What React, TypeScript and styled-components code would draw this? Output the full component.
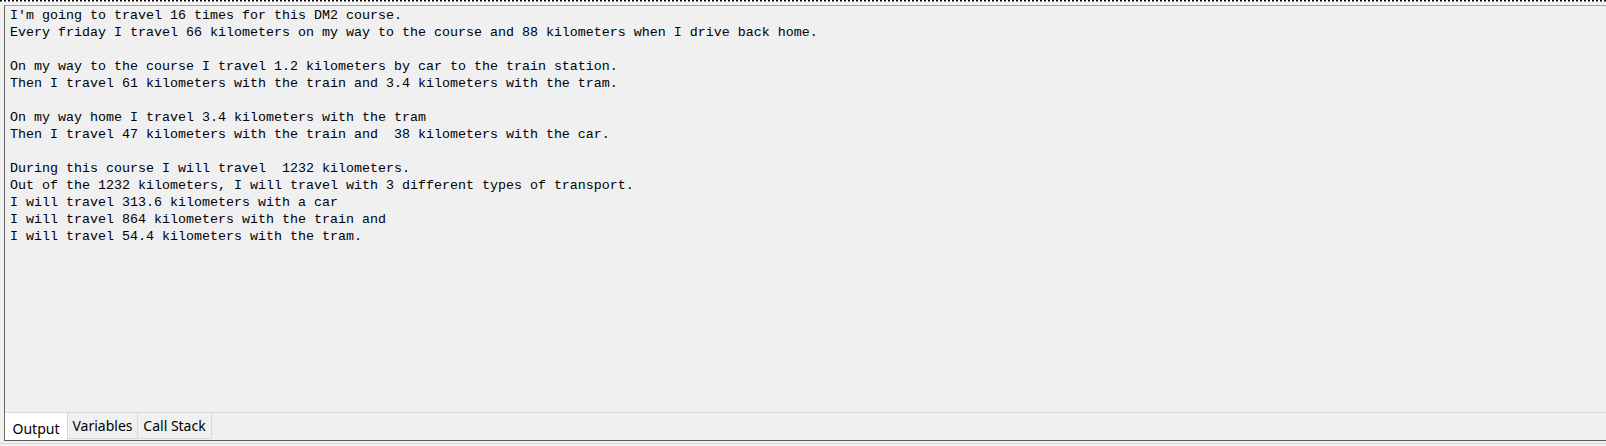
import React from "react";
import styled, { createGlobalStyle } from "styled-components";

const Global = createGlobalStyle`
  html, body { margin: 0; padding: 0; background: #f0f0f0; }
  body { width: 1606px; height: 446px; overflow: hidden; }
`;

const Frame = styled.div`
  width: 1606px;
  height: 446px;
  display: flex;
  flex-direction: column;
  background: #f0f0f0;
  box-sizing: border-box;
`;

const DotRule = styled.div`
  height: 2px;
  flex: none;
  background:
    repeating-linear-gradient(90deg, #111 0 2px, #fff 2px 4px) top / 100% 1px no-repeat,
    repeating-linear-gradient(90deg, #777 0 2px, #fff 2px 4px) bottom / 100% 1px no-repeat;
`;

const Panel = styled.div`
  flex: none;
  height: 436px;
  margin: 3px 0 0 4px;
  border-top: 1px solid #a0a0a0;
  border-left: 1px solid #696969;
  border-bottom: 1px solid #5a5a5a;
  display: flex;
  flex-direction: column;
  box-sizing: border-box;
`;

const Output = styled.pre`
  flex: 1;
  margin: 0;
  padding: 1px 0 0 5px;
  font-family: "Liberation Mono", "Courier New", monospace;
  font-size: 13.33px;
  line-height: 17px;
  color: #000;
  white-space: pre;
  overflow: hidden;
`;

const TabStrip = styled.div`
  flex: none;
  height: 28px;
  border-top: 1px solid #d9d9d9;
  display: flex;
  align-items: flex-start;
  box-sizing: border-box;
`;

const Tab = styled.div<{ $w: number; $active?: boolean }>`
  width: ${(p) => p.$w}px;
  height: ${(p) => (p.$active ? 27 : 26)}px;
  box-sizing: border-box;
  display: flex;
  align-items: center;
  justify-content: center;
  padding-top: ${(p) => (p.$active ? 3 : 0)}px;
  background: ${(p) => (p.$active ? "#ffffff" : "#f0f0f0")};
  border-right: 1px solid #d9d9d9;
  border-bottom: ${(p) => (p.$active ? "none" : "1px solid #d9d9d9")};
  font-family: "Segoe UI", "Noto Sans", sans-serif;
  font-size: 14px;
  color: #000;
`;

const Footer = styled.div`
  flex: 1;
  border-top: 2px solid #f0f0f0;
  position: relative;
  &::after {
    content: "";
    display: block;
    height: 1px;
    background: #d9d9d9;
  }
`;

const lines = [
  "I'm going to travel 16 times for this DM2 course.",
  "Every friday I travel 66 kilometers on my way to the course and 88 kilometers when I drive back home.",
  "",
  "On my way to the course I travel 1.2 kilometers by car to the train station.",
  "Then I travel 61 kilometers with the train and 3.4 kilometers with the tram.",
  "",
  "On my way home I travel 3.4 kilometers with the tram",
  "Then I travel 47 kilometers with the train and  38 kilometers with the car.",
  "",
  "During this course I will travel  1232 kilometers.",
  "Out of the 1232 kilometers, I will travel with 3 different types of transport.",
  "I will travel 313.6 kilometers with a car",
  "I will travel 864 kilometers with the train and",
  "I will travel 54.4 kilometers with the tram.",
];

export default function App() {
  return (
    <>
      <Global />
      <Frame>
        <DotRule />
        <Panel>
          <Output>{lines.join("\n")}</Output>
          <TabStrip>
            <Tab $w={63} $active>Output</Tab>
            <Tab $w={70}>Variables</Tab>
            <Tab $w={74}>Call Stack</Tab>
          </TabStrip>
        </Panel>
        <Footer />
      </Frame>
    </>
  );
}
